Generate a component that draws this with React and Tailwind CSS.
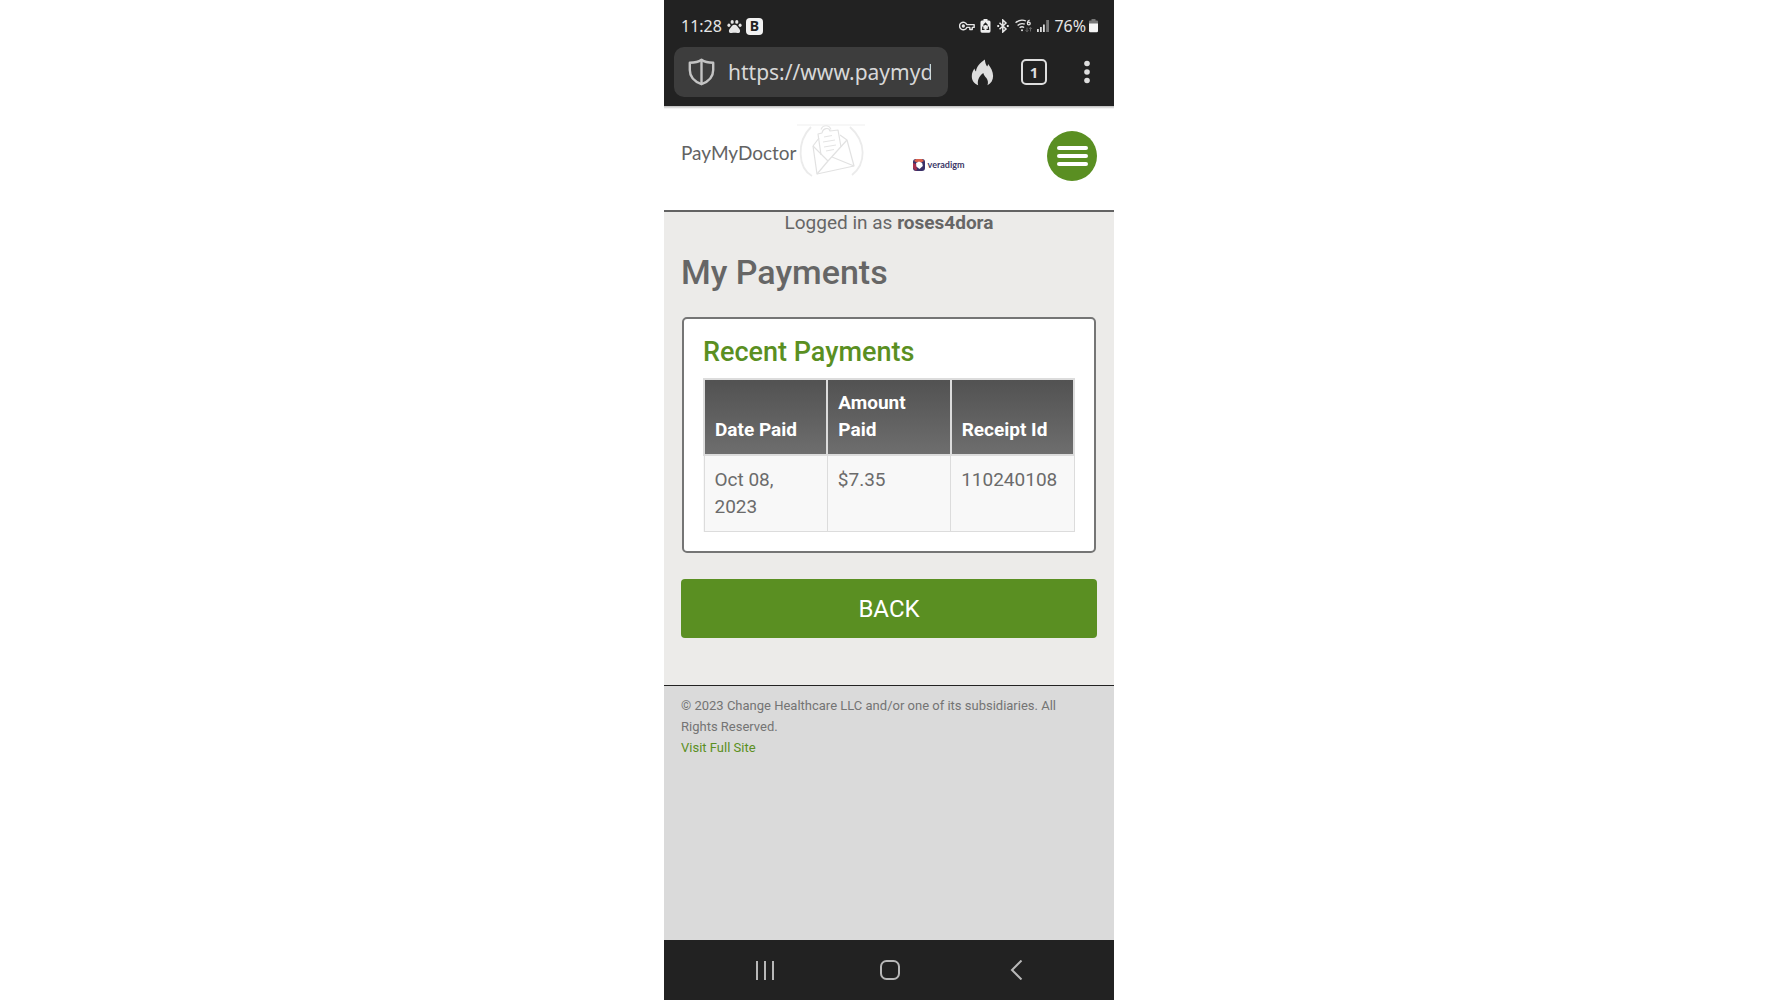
import { useState } from "react";

const payments = [
  { date: "Oct 08, 2023", amount: "$7.35", receipt: "110240108" },
];

function StatusBar() {
  return (
    <div className="flex items-center justify-between pl-[17px] pr-4 pt-[14px] font-['Noto_Sans',sans-serif] text-[16px] leading-6 text-[#e6e6e6]">
      <div className="flex items-center gap-1">
        <span className="mr-px">11:28</span>
        {/* Paw */}
        <svg width="15" height="15" viewBox="0 0 15 15" fill="currentColor">
          <ellipse cx="1.9" cy="6.3" rx="1.5" ry="1.8" />
          <ellipse cx="5.2" cy="2.9" rx="1.6" ry="1.9" />
          <ellipse cx="9.8" cy="2.9" rx="1.6" ry="1.9" />
          <ellipse cx="13.1" cy="6.3" rx="1.5" ry="1.8" />
          <path d="M7.5 5.8c2.2 0 2.9 1.8 3.9 3 1.3 1.3 2 2.5 1.6 3.9-.4 1.3-1.5 1.5-2.7 1.3-1.6-.3-4-.3-5.6 0-1.2.2-2.3 0-2.7-1.3-.4-1.4.3-2.6 1.6-3.9 1-1.2 1.700-3 3.900-3z" />
        </svg>
        <span className="flex h-[17px] w-[17px] items-center justify-center rounded-[4px] bg-[#f2f2f2] text-[14px] font-bold leading-none text-[#222]">
          B
        </span>
      </div>

      <div className="flex items-center">
        {/* Key */}
        <svg className="mr-[5px]" width="16" height="10" viewBox="0 0 17 10" fill="none" stroke="currentColor" strokeWidth="1.5">
          <path d="M8.3 3.5a4 4 0 1 0 0 3h3.2v2.2h2.6V6.5h2V3.5z" strokeLinejoin="round" />
          <circle cx="4.6" cy="5" r="1" fill="currentColor" />
        </svg>
        {/* Battery care */}
        <svg className="mr-1.5" width="11" height="14" viewBox="0 0 11 14">
          <path d="M3.5 0h4v1.5H9A1.5 1.5 0 0 1 10.500 3v9A1.700 1.700 0 0 1 9 13.800H2A1.700 1.700 0 0 1 .5 12V3A1.500 1.500 0 0 1 2 1.500h1.500z" fill="#eee" />
          <path d="M3.5 6.5l2-2.3 2 2.3M8.3 7.5l.3 2.8H6.5M4.5 10.3H2.6l.3-2.8" fill="none" stroke="#222" strokeWidth="1.2" />
        </svg>
        {/* Bluetooth */}
        <svg className="mr-1.5" width="12" height="14" viewBox="0 0 12 14" fill="none" stroke="currentColor" strokeWidth="1.5">
          <path d="M2.5 3.8l6.5 6.2-3.2 3V1L9 4 2.5 10.2" />
          <path d="M.3 7h1.8M9.9 7h1.8" strokeWidth="1.8" />
        </svg>
        {/* Wi-Fi 6 */}
        <svg className="mr-1" width="18" height="14" viewBox="0 0 18 14" fill="none" stroke="currentColor" strokeWidth="1.3">
          <path d="M.6 3.8C3.8.9 8 .6 11 2M2.6 6.4c2.3-2 5-2.2 7.2-1.2M4.6 8.8c1.4-1.2 3.2-1.2 4.5-.3" />
          <circle cx="7" cy="11.2" r="1" fill="currentColor" stroke="none" />
          <path d="M14.6 1.1c-1.5.4-2.2 1.4-2.2 2.8" />
          <circle cx="13.8" cy="4.5" r="1.4" />
          <path d="M12 8.5v4M10.6 11.2l1.4 1.6 1.4-1.6M15.5 12.5v-4M14.1 9.9l1.4-1.6 1.4 1.6" stroke="#666" strokeWidth="1" />
        </svg>
        {/* Signal */}
        <svg className="mr-[5px]" width="12" height="12" viewBox="0 0 12 12">
          <path d="M0 9h1.8v3H0zM3 7h1.8v5H3zM6 4.5h1.8V12H6z" fill="#ddd" />
          <path d="M9.2 0H12v12H9.2z" fill="#777" />
        </svg>
        <span className="mr-[3px]">76%</span>
        {/* Battery */}
        <svg width="9" height="14" viewBox="0 0 9 14">
          <path d="M2.5 0h4v1.5H8a1 1 0 0 1 1 1V5H0V2.5a1 1 0 0 1 1-1h1.5z" fill="#777" />
          <path d="M0 4.5h9V12a1.3 1.3 0 0 1-1.3 1.3H1.3A1.3 1.3 0 0 1 0 12z" fill="#f5f5f5" />
        </svg>
      </div>
    </div>
  );
}

function BrowserBar() {
  const [url, setUrl] = useState("https://www.paymydoctor.com");

  return (
    <div className="flex items-center pb-[9px] pl-[10px] pr-4 pt-[9px] text-[#dedede]">
      <div className="flex h-[50px] flex-1 items-center rounded-[10px] bg-[#3d3d3d] pl-3.5 pr-[17px]">
        <svg className="mr-[13px] shrink-0" width="27" height="28" viewBox="0 0 27 28" fill="none" stroke="#c4c4c4" strokeWidth="2.4" strokeLinejoin="round">
          <path d="M13.5 1.8C10.5 4 6 4.8 1.8 4.8V12c0 6.5 4.5 11.5 11.7 14.2C20.7 23.5 25.2 18.5 25.2 12V4.8C21 4.8 16.5 4 13.5 1.8z" />
          <path d="M13.5 2v24" />
        </svg>
        <input
          type="text"
          aria-label="Address"
          value={url}
          onChange={(e) => setUrl(e.target.value)}
          className="w-0 flex-1 bg-transparent font-['Noto_Sans',sans-serif] text-[21px] leading-8 text-[#d8d8d8] outline-none"
        />
      </div>
      <button aria-label="Clear browsing data" className="ml-[23px]">
        <svg width="23" height="27" viewBox="0 0 23 27" fill="currentColor">
          <path d="M13.8.5c.4 3.2 1 5 2.3 7 .6-.6.9-1.5 1-2.5 2.6 3.4 5 7.4 5 12 0 4-1.9 7.3-5.6 9.3.9-2.7.5-5.1-1.1-7.3-1.3-1.7-2.6-2.9-3.1-5.1-2.4 1.7-3.8 3.6-4.8 6-.8 2.1-.9 4.2-.3 6.4C3 24.6.8 21.400.8 17.300c0-3.200 1.200-5.600 2.600-7.800.3 1.300.8 2.200 1.600 3 .3-5.200 4.600-8.700 8.800-12z" />
          <path d="M12 17.5c.6 2 2.6 3 2.6 5.3 0 1.7-.7 2.900-1.800 3.700h-2.700c-1-.8-1.600-1.900-1.500-3.300.1-2.300 2.100-3.700 3.400-5.700z" fill="#222" />
        </svg>
      </button>
      <button
        aria-label="Tabs"
        className="ml-[27px] flex h-[26px] w-[26px] items-center justify-center rounded-[5px] border-[2px] border-[#dedede] font-['Noto_Sans',sans-serif] text-[15px] font-bold leading-none"
      >
        1
      </button>
      <button aria-label="Menu" className="ml-[29px] px-[8px]">
        <svg width="6" height="24" viewBox="0 0 6 24" fill="currentColor">
          <circle cx="3" cy="3.5" r="2.8" />
          <circle cx="3" cy="12" r="2.8" />
          <circle cx="3" cy="20.5" r="2.8" />
        </svg>
      </button>
    </div>
  );
}

function SiteHeader() {
  return (
    <header className="flex h-[106px] items-start border-b-2 border-[#636363] bg-linear-to-b from-[#bbbbbb] to-white to-[3px] px-[17px] pt-[18px]">
      <div className="flex items-center">
        <span className="mt-1 font-[Lato,sans-serif] text-[19px] leading-6 text-[#636363]">
          PayMyDoctor
        </span>
        {/* Envelope seal */}
        <svg width="68" height="54" viewBox="0 0 68 54" fill="none" stroke="#e2e2e2" strokeWidth="1.2" strokeLinejoin="round">
          <path d="M0 1h68" stroke="#efefef" />
          <path d="M15 52C1 44-1 18 14 3M53 3c17 15 16 37 2 48" strokeWidth="1.8" stroke="#ebebeb" />
          <path d="M24 5.5c2-5 8-5 10 0" stroke="#e6e6e6" />
          <path d="M16 22l4 28 37-8-7-26-7-5" />
          <path d="M16 22l6-8M16 22l15 15 19-21M20 50l11-13M57 42L35 33" />
          <path d="M24 31l-3-21 4-1c1-5 7-6 8-2l8-1 3 17" />
          <path d="M27 13l8-1.5M26 18l12-2M27 23l12-2M29 27l8-1.5" stroke="#e4e4e4" />
        </svg>
      </div>
      <div className="ml-[48px] mt-[35px] flex items-center gap-[3px]">
        <svg width="12" height="12" viewBox="0 0 12 12">
          <rect width="12" height="12" rx="3" fill="#3a3068" />
          <path d="M3 0h6l2 2-3 1.5H4L1 2z" fill="#d9604c" />
          <path d="M0 9V4l3 1 1 5-1 2z" fill="#a5304f" />
          <path d="M6 2.6l3.2 1.3.6 3L6.5 10 3.3 7.5l-.2-3.6z" fill="#fff" />
        </svg>
        <span className="font-[Lato,sans-serif] text-[9px] font-bold leading-3 text-[#3c3768]">
          veradigm
        </span>
      </div>
      <button
        aria-label="Open menu"
        className="ml-auto mt-[7px] flex h-[50px] w-[50px] flex-col items-center justify-center gap-1 rounded-full bg-[#5a8f22]"
      >
        <span className="h-1 w-[31px] rounded-full bg-white" />
        <span className="h-1 w-[31px] rounded-full bg-white" />
        <span className="h-1 w-[31px] rounded-full bg-white" />
      </button>
    </header>
  );
}

function PaymentsTable() {
  const head =
    "border-2 border-[#dcdcdc] bg-linear-to-b from-[#525252] to-[#6e6e6e] px-2.5 pb-[11px] pt-[9px] align-bottom font-bold text-white";
  const cell = "border border-[#dcdcdc] px-2.5 pb-[11px] pt-[10px] align-top";

  return (
    <table className="w-full table-fixed border-collapse bg-[#f8f8f8] text-left text-[19px] leading-[27px] text-[#6b6b6b]">
      <thead>
        <tr>
          <th className={head}>Date Paid</th>
          <th className={head}>Amount Paid</th>
          <th className={head}>Receipt Id</th>
        </tr>
      </thead>
      <tbody>
        {payments.map((p) => (
          <tr key={p.receipt}>
            <td className={cell}>{p.date}</td>
            <td className={cell}>{p.amount}</td>
            <td className={cell}>{p.receipt}</td>
          </tr>
        ))}
      </tbody>
    </table>
  );
}

function NavBar() {
  return (
    <nav className="flex h-[60px] items-center justify-around bg-[#222222] pl-[38px] pr-[35px] text-[#b8b8b8]">
      <button aria-label="Recent apps">
        <svg width="20" height="20" viewBox="0 0 20 20" stroke="currentColor" strokeWidth="2">
          <path d="M2 1v19M10 1v19M18 1v19" />
        </svg>
      </button>
      <button aria-label="Home">
        <svg width="20" height="20" viewBox="0 0 20 20" fill="none" stroke="currentColor" strokeWidth="2">
          <rect x="1" y="1" width="18" height="18" rx="5.5" />
        </svg>
      </button>
      <button aria-label="Go back">
        <svg width="20" height="20" viewBox="0 0 20 20" fill="none" stroke="currentColor" strokeWidth="2">
          <path d="M15.5.5L6 10l9.5 9.5" />
        </svg>
      </button>
    </nav>
  );
}

export default function App() {
  return (
    <div className="flex min-h-screen justify-center bg-white font-[Roboto,sans-serif]">
      <div className="flex w-full max-w-[450px] flex-col">
        <div className="bg-[#222222]">
          <StatusBar />
          <BrowserBar />
        </div>
        <SiteHeader />

        <main className="border-b border-[#222222] bg-[#ecebe9] px-[17px] pb-[47px] text-[#666666]">
          <p className="text-center text-[19px] leading-[22px]">
            Logged in as <b>roses4dora</b>
          </p>
          <h1 className="mt-4 text-[34px] font-medium leading-[44px]">My Payments</h1>

          <section className="mx-px mt-[23px] rounded-[5px] border-2 border-[#757575] bg-white px-[19px] pb-[19px] pt-[15px]">
            <h2 className="mb-2 text-[27px] font-medium leading-9 text-[#5a8f22]">
              Recent Payments
            </h2>
            <PaymentsTable />
          </section>

          <button className="mt-[26px] h-[59px] w-full rounded-[4px] bg-[#5a8f22] text-[24px] text-white">
            BACK
          </button>
        </main>

        <footer className="flex-1 bg-[#dadada] pl-[17px] pr-[30px] pt-[9px] text-[13px] leading-[21px] text-[#747474]">
          <p>
            © 2023 Change Healthcare LLC and/or one of its subsidiaries. All
            Rights Reserved.
          </p>
          <a href="#full-site" className="text-[#5a8f22]">
            Visit Full Site
          </a>
        </footer>
        <NavBar />
      </div>
    </div>
  );
}
